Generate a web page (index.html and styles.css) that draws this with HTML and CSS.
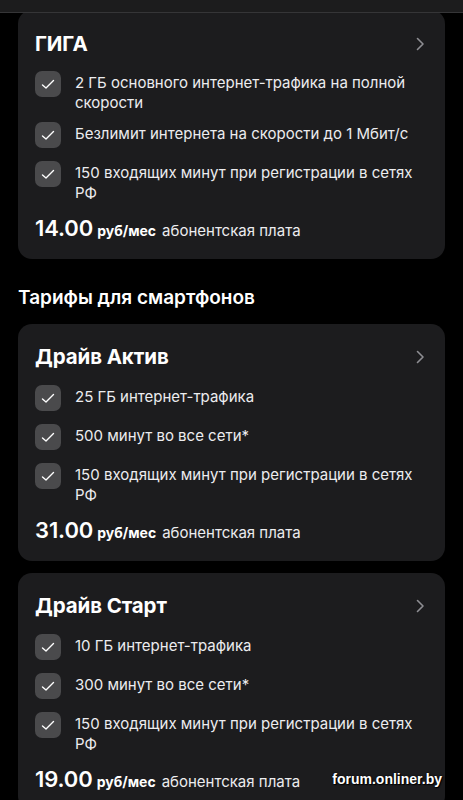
FILE: index.html
```html
<!DOCTYPE html>
<html lang="ru">
<head>
<meta charset="utf-8">
<title>Тарифы</title>
<link rel="stylesheet" href="styles.css">
</head>
<body>
<div class="topbar"></div>
<main class="page">
  <section class="card card-first">
    <div class="card-head">
      <h2 class="card-title">ГИГА</h2>
      <svg class="chev" width="9" height="14" viewBox="0 0 9 14"><path d="M1.5 1.5 L7 7 L1.5 12.5" fill="none" stroke="#8e8e93" stroke-width="1.6" stroke-linecap="round" stroke-linejoin="round"/></svg>
    </div>
    <ul class="features">
      <li class="feature"><span class="check"><svg width="14" height="11" viewBox="0 0 14 11"><path d="M1.5 6 L5 9 L12.5 1.5" fill="none" stroke="#fff" stroke-width="1.4" stroke-linecap="round" stroke-linejoin="round"/></svg></span><span class="ftext">2 ГБ основного интернет-трафика на полной скорости</span></li>
      <li class="feature"><span class="check"><svg width="14" height="11" viewBox="0 0 14 11"><path d="M1.5 6 L5 9 L12.5 1.5" fill="none" stroke="#fff" stroke-width="1.4" stroke-linecap="round" stroke-linejoin="round"/></svg></span><span class="ftext">Безлимит интернета на скорости до 1 Мбит/с</span></li>
      <li class="feature"><span class="check"><svg width="14" height="11" viewBox="0 0 14 11"><path d="M1.5 6 L5 9 L12.5 1.5" fill="none" stroke="#fff" stroke-width="1.4" stroke-linecap="round" stroke-linejoin="round"/></svg></span><span class="ftext">150 входящих минут при регистрации в сетях РФ</span></li>
    </ul>
    <p class="price"><span class="amount">14.00</span><span class="unit">руб/мес</span><span class="desc">абонентская плата</span></p>
  </section>

  <h3 class="section-title">Тарифы для смартфонов</h3>

  <section class="card">
    <div class="card-head">
      <h2 class="card-title">Драйв Актив</h2>
      <svg class="chev" width="9" height="14" viewBox="0 0 9 14"><path d="M1.5 1.5 L7 7 L1.5 12.5" fill="none" stroke="#8e8e93" stroke-width="1.6" stroke-linecap="round" stroke-linejoin="round"/></svg>
    </div>
    <ul class="features">
      <li class="feature"><span class="check"><svg width="14" height="11" viewBox="0 0 14 11"><path d="M1.5 6 L5 9 L12.5 1.5" fill="none" stroke="#fff" stroke-width="1.4" stroke-linecap="round" stroke-linejoin="round"/></svg></span><span class="ftext">25 ГБ интернет-трафика</span></li>
      <li class="feature"><span class="check"><svg width="14" height="11" viewBox="0 0 14 11"><path d="M1.5 6 L5 9 L12.5 1.5" fill="none" stroke="#fff" stroke-width="1.4" stroke-linecap="round" stroke-linejoin="round"/></svg></span><span class="ftext">500 минут во все сети*</span></li>
      <li class="feature"><span class="check"><svg width="14" height="11" viewBox="0 0 14 11"><path d="M1.5 6 L5 9 L12.5 1.5" fill="none" stroke="#fff" stroke-width="1.4" stroke-linecap="round" stroke-linejoin="round"/></svg></span><span class="ftext">150 входящих минут при регистрации в сетях РФ</span></li>
    </ul>
    <p class="price"><span class="amount">31.00</span><span class="unit">руб/мес</span><span class="desc">абонентская плата</span></p>
  </section>

  <section class="card">
    <div class="card-head">
      <h2 class="card-title">Драйв Старт</h2>
      <svg class="chev" width="9" height="14" viewBox="0 0 9 14"><path d="M1.5 1.5 L7 7 L1.5 12.5" fill="none" stroke="#8e8e93" stroke-width="1.6" stroke-linecap="round" stroke-linejoin="round"/></svg>
    </div>
    <ul class="features">
      <li class="feature"><span class="check"><svg width="14" height="11" viewBox="0 0 14 11"><path d="M1.5 6 L5 9 L12.5 1.5" fill="none" stroke="#fff" stroke-width="1.4" stroke-linecap="round" stroke-linejoin="round"/></svg></span><span class="ftext">10 ГБ интернет-трафика</span></li>
      <li class="feature"><span class="check"><svg width="14" height="11" viewBox="0 0 14 11"><path d="M1.5 6 L5 9 L12.5 1.5" fill="none" stroke="#fff" stroke-width="1.4" stroke-linecap="round" stroke-linejoin="round"/></svg></span><span class="ftext">300 минут во все сети*</span></li>
      <li class="feature"><span class="check"><svg width="14" height="11" viewBox="0 0 14 11"><path d="M1.5 6 L5 9 L12.5 1.5" fill="none" stroke="#fff" stroke-width="1.4" stroke-linecap="round" stroke-linejoin="round"/></svg></span><span class="ftext">150 входящих минут при регистрации в сетях РФ</span></li>
    </ul>
    <p class="price"><span class="amount">19.00</span><span class="unit">руб/мес</span><span class="desc">абонентская плата</span></p>
  </section>
</main>
<div class="watermark">forum.onliner.by</div>
</body>
</html>
```

FILE: styles.css
```css
* { box-sizing: border-box; }
html, body {
  margin: 0;
  padding: 0;
  background: #000;
  height: 800px;
  overflow: hidden;
}
body {
  font-family: Inter, "Noto Sans", "DejaVu Sans", sans-serif;
  color: #ececef;
  position: relative;
}
.topbar {
  position: absolute;
  top: 0;
  left: 0;
  right: 0;
  height: 13px;
  background: #1c1c1d;
  border-bottom: 1px solid #353537;
  z-index: 5;
}
.page {
  padding: 10px 18px 0;
  display: flex;
  flex-direction: column;
}
.card {
  background: #1c1c1e;
  border-radius: 14px;
  padding: 20px 21px 17px 17px;
  margin-bottom: 12px;
}
.card-first .card-head { margin-top: 1px; margin-bottom: -1px; }
.card-head {
  display: flex;
  align-items: center;
  justify-content: space-between;
  height: 26px;
}
.card-title {
  margin: 0;
  font-size: 20.5px;
  line-height: 26px;
  font-weight: 700;
  color: #fff;
  letter-spacing: -0.1px;
}
.chev { display: block; margin-right: -1px; }
.features {
  list-style: none;
  margin: 15px 0 0;
  padding: 0;
  display: flex;
  flex-direction: column;
  gap: 8px;
}
.feature {
  display: flex;
  align-items: flex-start;
  gap: 14px;
  padding-right: 4px;
}
.check {
  flex: 0 0 26px;
  width: 26px;
  height: 26px;
  margin-bottom: 5px;
  border-radius: 7px;
  background: #4a4a4c;
  display: flex;
  align-items: center;
  justify-content: center;
}
.check svg { display: block; margin-top: 1px; }
.ftext {
  padding-top: 2px;
  padding-bottom: 1px;
  font-size: 15px;
  line-height: 20px;
  color: #ececef;
}
.price {
  margin: 10px 0 0;
  height: 28px;
  display: flex;
  align-items: baseline;
  line-height: 28px;
}
.amount {
  font-size: 22px;
  font-weight: 600;
  color: #fff;
  margin-right: 4px;
  letter-spacing: -0.1px;
}
.unit {
  font-size: 14px;
  font-weight: 700;
  color: #fff;
  margin-right: 6px;
}
.desc {
  font-size: 15px;
  color: #ececef;
}
.section-title {
  margin: 15px 0 14px;
  font-size: 19px;
  line-height: 24px;
  font-weight: 600;
  color: #fff;
}
.watermark {
  position: absolute;
  right: 21px;
  top: 770px;
  font-family: "Liberation Sans", Arial, sans-serif;
  font-weight: 700;
  font-size: 14px;
  line-height: 18px;
  color: #fff;
  text-shadow: 0 0 2px #000, 1px 1px 1px #000;
}
```
